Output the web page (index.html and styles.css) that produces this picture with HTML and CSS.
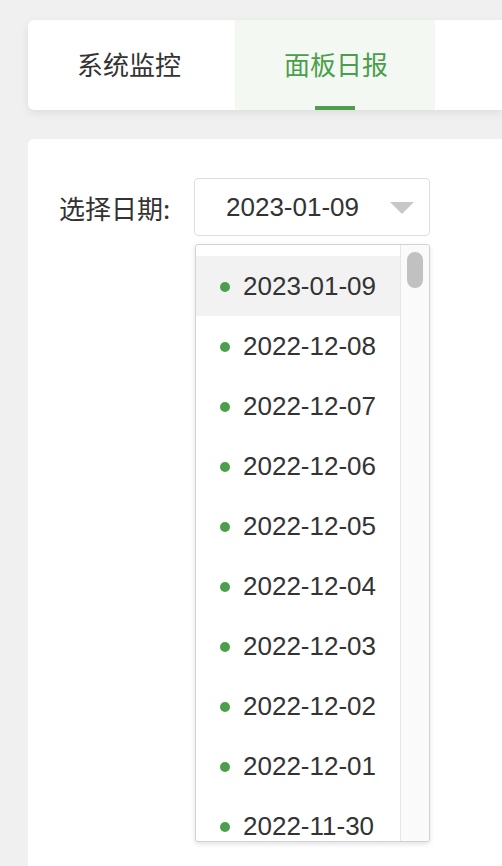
FILE: index.html
```html
<!DOCTYPE html>
<html lang="zh">
<head>
<meta charset="utf-8">
<title>面板日报</title>
<link rel="stylesheet" href="styles.css">
</head>
<body>
<div class="page">
  <div class="tabs">
    <div class="tab tab-first">系统监控</div>
    <div class="tab tab-active">面板日报<span class="tab-bar"></span></div>
  </div>
  <div class="content">
    <div class="field">
      <span class="label">选择日期:</span>
      <div class="select-wrap">
        <div class="select">
          <span class="select-value">2023-01-09</span>
          <span class="caret"></span>
        </div>
        <div class="dropdown">
          <ul class="options">
            <li class="option option-hover"><span class="dot"></span>2023-01-09</li>
            <li class="option"><span class="dot"></span>2022-12-08</li>
            <li class="option"><span class="dot"></span>2022-12-07</li>
            <li class="option"><span class="dot"></span>2022-12-06</li>
            <li class="option"><span class="dot"></span>2022-12-05</li>
            <li class="option"><span class="dot"></span>2022-12-04</li>
            <li class="option"><span class="dot"></span>2022-12-03</li>
            <li class="option"><span class="dot"></span>2022-12-02</li>
            <li class="option"><span class="dot"></span>2022-12-01</li>
            <li class="option"><span class="dot"></span>2022-11-30</li>
          </ul>
          <div class="scroll-track"><div class="scroll-thumb"></div></div>
        </div>
      </div>
    </div>
  </div>
</div>
</body>
</html>
```
FILE: styles.css
```css
html, body {
  margin: 0;
  padding: 0;
  height: 100%;
  overflow: hidden;
  background: #f0f0f0;
}
body {
  font-family: "Liberation Sans", "Noto Sans CJK SC", Arial, sans-serif;
  color: #333;
}
.page {
  padding: 20px 0 0 28px;
  height: 100%;
  box-sizing: border-box;
  display: flex;
  flex-direction: column;
}
.tabs {
  display: flex;
  height: 90px;
  flex: none;
  background: #fff;
  border-radius: 6px 0 0 6px;
  box-shadow: 0 3px 8px rgba(0, 0, 0, 0.08);
}
.tab {
  position: relative;
  display: flex;
  align-items: center;
  padding-left: 49px;
  padding-bottom: 3px;
  box-sizing: border-box;
  font-size: 26px;
  font-family: "Noto Sans CJK SC", "Liberation Sans", sans-serif;
  color: #333;
}
.tab-first {
  width: 207px;
}
.tab-active {
  width: 200px;
  background: #f3f8f3;
  color: #4b9e4b;
}
.tab-bar {
  position: absolute;
  left: 80px;
  bottom: 0;
  width: 40px;
  height: 4px;
  background: #4b9e4b;
}
.content {
  margin-top: 29px;
  flex: 1;
  min-height: 0;
  overflow: hidden;
  background: #fff;
  border-radius: 6px 0 0 0;
  padding: 39px 0 0 31px;
}
.field {
  display: flex;
  align-items: flex-start;
}
.label {
  height: 58px;
  display: flex;
  align-items: center;
  font-size: 26px;
  font-family: "Noto Sans CJK SC", "Liberation Sans", sans-serif;
  color: #333;
  width: 135px;
  white-space: nowrap;
}
.select-wrap {
  width: 236px;
}
.select {
  height: 58px;
  box-sizing: border-box;
  border: 1px solid #dedede;
  border-radius: 4px;
  display: flex;
  align-items: center;
  padding-left: 31px;
  padding-right: 15px;
}
.select-value {
  flex: 1;
  font-size: 26px;
  color: #333;
}
.caret {
  width: 0;
  height: 0;
  border-left: 12px solid transparent;
  border-right: 12px solid transparent;
  border-top: 12px solid #c8c8c8;
  margin-top: 2px;
}
.dropdown {
  margin-top: 8px;
  margin-left: 1px;
  width: 235px;
  height: 598px;
  box-sizing: border-box;
  border: 1px solid #d2d2d2;
  border-radius: 3px;
  background: #fff;
  box-shadow: 0 2px 5px rgba(0, 0, 0, 0.12);
  display: flex;
  overflow: hidden;
}
.options {
  list-style: none;
  margin: 0;
  padding: 11px 0 0 0;
  flex: 1;
  overflow: hidden;
}
.option {
  height: 60px;
  display: flex;
  align-items: center;
  padding-left: 24px;
  font-size: 26px;
  color: #333;
}
.option-hover {
  background: #f2f2f2;
}
.dot {
  width: 10px;
  height: 10px;
  border-radius: 50%;
  background: #4b9e4b;
  margin-right: 13px;
  margin-top: 2px;
}
.scroll-track {
  width: 29px;
  border-left: 1px solid #e6e6e6;
  background: #fafafa;
  padding: 7px 0 0 6px;
  box-sizing: border-box;
}
.scroll-thumb {
  width: 16px;
  height: 36px;
  border-radius: 8px;
  background: #c1c1c1;
}
```
